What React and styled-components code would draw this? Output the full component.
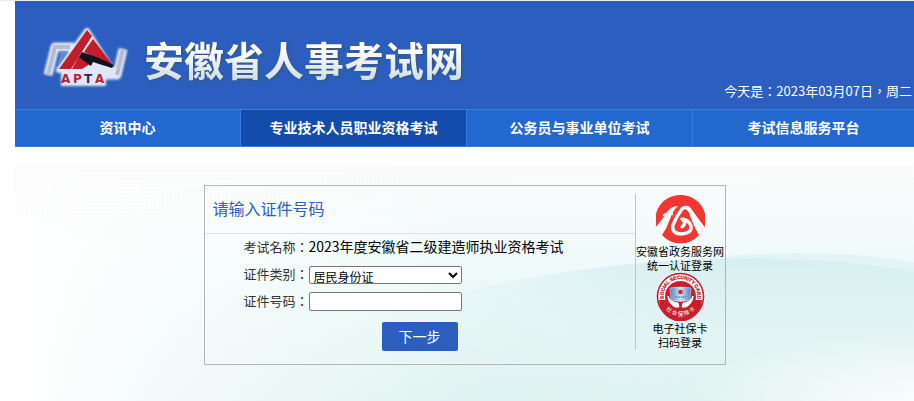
import React, { useState } from 'react'
import styled, { createGlobalStyle } from 'styled-components'

const colors = {
  primary: '#2b5ebf',
  nav: '#2368cf',
  navActive: '#134cab',
  navBorder: '#3b7ade',
  border: '#b5b5b5',
  red: '#f03731',
  seal: '#c81f2d',
}

const sans = `'Noto Sans CJK SC', sans-serif`
// the TC face centres the full-width colon and comma
const sansCentered = `'Noto Sans CJK TC', 'Noto Sans CJK SC', sans-serif`

const GlobalStyle = createGlobalStyle`
  * {
    box-sizing: border-box;
  }
  body {
    margin: 0;
    background: #fff;
    font-family: ${sans};
    font-size: 14px;
    color: #000;
  }
`

const Page = styled.div`
  display: flex;
  flex-direction: column;
  min-height: 100vh;
  border-top: 1px solid #ececec;
  padding-left: 15px;
`

const Header = styled.header`
  display: flex;
  justify-content: space-between;
  height: 108px;
  padding: 25px 2px 0 27px;
  background: ${colors.primary};
`

const Brand = styled.a`
  display: flex;
  align-items: flex-start;
  gap: 14px;
  text-decoration: none;
`

const SiteName = styled.h1`
  margin: 3px 0 0;
  font-size: 40px;
  line-height: 60px;
  font-weight: 700;
  white-space: nowrap;
  color: transparent;
  background: linear-gradient(#fff 30%, #cfe0e8 85%);
  background-clip: text;
  filter: drop-shadow(1px 1px 1px rgba(70, 80, 90, 0.8));
`

const Today = styled.p`
  align-self: flex-end;
  margin: 0 0 8px;
  font-family: ${sansCentered};
  font-size: 13px;
  line-height: 20px;
  white-space: nowrap;
  color: #fff;
`

const Nav = styled.nav`
  display: grid;
  grid-template-columns: 226fr 226fr 226fr 221fr;
  border-top: 1px solid ${colors.navBorder};
  border-bottom: 1px solid ${colors.navBorder};
`

const NavLink = styled.a`
  padding-bottom: 2px;
  border-right: 1px solid ${colors.navBorder};
  background: ${(props) => (props.$active ? colors.navActive : colors.nav)};
  color: #fff;
  font-weight: 700;
  line-height: 34px;
  text-align: center;
  text-decoration: none;
  white-space: nowrap;
  &:last-child {
    border-right: 0;
  }
`

const Main = styled.main`
  position: relative;
  display: flex;
  justify-content: center;
  align-items: flex-start;
  flex: 1;
  margin-top: 19px;
  padding: 19px 16px 36px;
`

const Scenery = styled.svg`
  position: absolute;
  inset: 0;
  width: 100%;
  height: 100%;
`

const Panel = styled.section`
  position: relative;
  display: flex;
  width: 522px;
  min-height: 180px;
  border: 1px solid ${colors.border};
`

const Form = styled.form`
  flex: 1;
`

const Title = styled.h2`
  margin: 0;
  padding: 0 0 2px 8px;
  border-bottom: 1px solid #e2dfe2;
  color: ${colors.primary};
  font-size: 16px;
  line-height: 45px;
  font-weight: 400;
`

const Row = styled.div`
  display: flex;
  align-items: center;
  height: 27px;
`

const Label = styled.label`
  width: 104px;
  padding-bottom: 3px;
  font-family: ${sansCentered};
  font-size: 13px;
  text-align: right;
  color: #333;
`

const ExamName = styled.output`
  padding-bottom: 3px;
  font-size: 14px;
`

const Select = styled.select`
  width: 153px;
  height: 18px;
  padding: 0;
  border: 1px solid #767676;
  border-radius: 2px;
  background-color: #fff;
  color: #000;
  font-family: ${sans};
  font-size: 12px;
`

const Input = styled.input`
  width: 153px;
  height: 19px;
  border: 1px solid #767676;
  border-radius: 2px;
  background: #fff;
  font-size: 13px;
`

const NextButton = styled.button`
  display: block;
  width: 76px;
  height: 29px;
  margin: 7px auto 0;
  padding: 0 0 2px;
  border: 0;
  border-radius: 2px;
  background: ${colors.primary};
  color: #fff;
  font-family: ${sans};
  font-size: 14px;
`

const Side = styled.aside`
  display: flex;
  flex-direction: column;
  width: 90px;
  margin: 8px 0 14px;
  padding-top: 1px;
  border-left: 1px solid #c4c4c4;
`

const LoginLink = styled.a`
  display: flex;
  flex-direction: column;
  align-items: center;
  color: #000;
  font-size: 11px;
  line-height: 14px;
  text-align: center;
  text-decoration: none;
  white-space: nowrap;
`

const AptaLogo = () => (
  <svg width="88" height="62" viewBox="0 0 88 62" aria-hidden="true">
    <defs>
      <filter id="glow" x="-20%" y="-20%" width="140%" height="140%">
        <feGaussianBlur stdDeviation="0.8" />
      </filter>
    </defs>
    <g filter="url(#glow)" fill="none" stroke="#dfe8f6" strokeWidth="9" strokeLinejoin="round">
      <path d="M32 21H13L6 49" />
      <path d="M81 23L75 49H63" />
      <path d="M45 5L17 44H70Z" fill="#dfe8f6" strokeWidth="6" />
      <path d="M19 53H64" strokeWidth="14" />
    </g>
    <path d="M28 21H13L6 49M81 23L75 49" fill="none" stroke="#b4bdcd" strokeWidth="4" />
    <path d="M19 25L15 41L26 25Z" fill="#6f91d2" opacity="0.8" />
    <path d="M45 4L50 10L29 43H17Z" fill="#c31c2b" />
    <path d="M51 13L70 38L63 37L42 26Z" fill="#c31c2b" />
    <path d="M37 30L48 38L40 43H30Z" fill="#c31c2b" />
    <path d="M40 26L57 32L72 39L70 42L57 38L51 36L49 40L37 31Z" fill="#10141c" />
    <g fontFamily="'DejaVu Sans', sans-serif" fontSize="12" fontWeight="700" fill="#b3243a">
      <text x="19" y="57">A</text>
      <text x="31" y="57">P</text>
      <text x="42" y="57" fill="#27304a">T</text>
      <text x="53" y="57">A</text>
    </g>
  </svg>
)

const GovServiceLogo = () => (
  <svg width="49" height="49" viewBox="0 0 49 49" aria-hidden="true">
    <path
      d="M24.500 0A24.500 24.500 0 0 1 48.500 32L43 40A24.500 24.500 0 0 1 6 40L.5 32A24.500 24.500 0 0 1 24.500 0Z"
      fill={colors.red}
    />
    <path d="M0 32L10 19Q14 11 22 11Q17 15 14 24Q11 33 6 40Z" fill="#fff" />
    <path d="M48.500 32L36 15Q33 9 28 12L33 17Q36 28 43 40Z" fill="#fff" />
    <g fill="none" stroke="#fff" strokeLinecap="round" strokeLinejoin="round">
      <path d="M8 20Q12 17.500 16 19" strokeWidth="2.500" />
      <path
        d="M34 16Q30 10 26 14Q20 22 17 30Q15 38.500 25 39Q36 38.500 35 31Q33 25 26 24Q31 28 26 32"
        strokeWidth="3.500"
      />
    </g>
  </svg>
)

const SocialCardLogo = () => (
  <svg width="49" height="49" viewBox="0 0 49 49" aria-hidden="true">
    <defs>
      <path id="seal-top" d="M9.500 32A17 17 0 1 1 39.500 32" />
      <path id="seal-bottom" d="M6 31A19.800 19.800 0 0 0 43 31" />
      <linearGradient id="card" x1="0" y1="0" x2="1" y2="0">
        <stop offset="0" stopColor="#4b83c9" />
        <stop offset="0.5" stopColor="#cfe5f7" />
        <stop offset="1" stopColor="#4b83c9" />
      </linearGradient>
    </defs>
    <circle cx="24.500" cy="24.500" r="23" fill="#fff" stroke={colors.seal} strokeWidth="1.600" />
    <path d="M3 28A21.500 21.500 0 0 0 46 28Z" fill={colors.seal} />
    <circle cx="24.500" cy="24.500" r="15.500" fill={colors.seal} />
    <text
      fontFamily="'Liberation Sans Narrow', 'Liberation Sans', sans-serif"
      fontSize="4.800"
      fontWeight="700"
      fill={colors.seal}
      stroke={colors.seal}
      strokeWidth="0.300"
    >
      <textPath href="#seal-top" startOffset="50%" textAnchor="middle">
        SOCIAL SECURITY CARD
      </textPath>
    </text>
    <text fontFamily={sans} fontSize="5.500" fill="#fff">
      <textPath href="#seal-bottom" startOffset="50%" textAnchor="middle">
        社 会 保 障 卡
      </textPath>
    </text>
    <path
      d="M12 24Q14 30 22 31L23 35H19Q12 31 12 24ZM37 24Q35 30 27 31L26 35H30Q37 31 37 24Z"
      fill="#fff"
      stroke="#fff"
    />
    <path d="M14 16Q24.500 14 35 16L34 28Q24.500 31 15 28Z" fill="url(#card)" stroke="#dcecf8" strokeWidth="0.500" />
    <circle cx="24.500" cy="20" r="2.300" fill="#e2202c" />
    <path d="M19 25H30" stroke="#3f6fae" strokeWidth="1.200" strokeDasharray="1.500 0.500" />
  </svg>
)

const Background = () => (
  <Scenery viewBox="0 0 899 235" preserveAspectRatio="none" aria-hidden="true">
    <defs>
      <linearGradient id="sky" x1="0" y1="0" x2="0" y2="1">
        <stop offset="0" stopColor="#fcfcfc" />
        <stop offset="0.400" stopColor="#f0fafa" />
        <stop offset="1" stopColor="#dff3f1" />
      </linearGradient>
      <linearGradient id="hill" x1="0" y1="0" x2="0" y2="1">
        <stop offset="0" stopColor="#cfebee" />
        <stop offset="1" stopColor="#e0f3f1" stopOpacity="0" />
      </linearGradient>
      <linearGradient id="hill-fade">
        <stop offset="0.400" stopColor="#000" />
        <stop offset="0.750" stopColor="#fff" />
      </linearGradient>
      <mask id="hill-mask">
        <rect width="899" height="235" fill="url(#hill-fade)" />
      </mask>
      <linearGradient id="left-fade">
        <stop offset="0" stopColor="#fff" />
        <stop offset="0.350" stopColor="#fff" stopOpacity="0.600" />
        <stop offset="1" stopColor="#fff" stopOpacity="0" />
      </linearGradient>
      <radialGradient id="corner">
        <stop offset="0" stopColor="#fafdfd" />
        <stop offset="1" stopColor="#fafdfd" stopOpacity="0" />
      </radialGradient>
      <linearGradient id="dots-fade" x1="0" y1="0" x2="0" y2="1">
        <stop offset="0" stopColor="#fff" />
        <stop offset="1" stopColor="#000" />
      </linearGradient>
      <mask id="dots-mask">
        <rect width="899" height="80" fill="url(#dots-fade)" />
      </mask>
      <pattern id="dots" width="4" height="4" patternUnits="userSpaceOnUse">
        <path d="M0 0H4M0 0V4" stroke="#f7f8f8" strokeWidth="2" />
      </pattern>
    </defs>
    <rect width="899" height="235" fill="url(#sky)" />
    <g mask="url(#hill-mask)">
      <path d="M340 160C500 96 740 76 899 106V235H340Z" fill="url(#hill)" opacity="0.800" />
      <path d="M690 92C760 84 840 86 899 96V120Q800 90 690 92Z" fill="#d8f0f0" opacity="0.600" />
    </g>
    <rect width="460" height="235" fill="url(#left-fade)" />
    <ellipse cx="899" cy="235" rx="230" ry="70" fill="url(#corner)" />
    <rect width="899" height="80" fill="url(#dots)" mask="url(#dots-mask)" />
  </Scenery>
)

const navItems = ['资讯中心', '专业技术人员职业资格考试', '公务员与事业单位考试', '考试信息服务平台']

const LoginForm = () => {
  const [idNumber, setIdNumber] = useState('')
  return (
    <Form onSubmit={(e) => e.preventDefault()}>
      <Title>请输入证件号码</Title>
      <Row>
        <Label htmlFor="exam">考试名称：</Label>
        <ExamName id="exam">2023年度安徽省二级建造师执业资格考试</ExamName>
      </Row>
      <Row>
        <Label htmlFor="idType">证件类别：</Label>
        <Select id="idType">
          <option>居民身份证</option>
        </Select>
      </Row>
      <Row>
        <Label htmlFor="idNumber">证件号码：</Label>
        <Input id="idNumber" value={idNumber} onChange={(e) => setIdNumber(e.target.value)} />
      </Row>
      <NextButton type="submit">下一步</NextButton>
    </Form>
  )
}

const App = () => (
  <>
    <GlobalStyle />
    <Page>
      <Header>
        <Brand href="#">
          <AptaLogo />
          <SiteName>安徽省人事考试网</SiteName>
        </Brand>
        <Today>今天是：2023年03月07日，周二</Today>
      </Header>
      <Nav>
        {navItems.map((item, i) => (
          <NavLink key={item} href="#" $active={i === 1}>
            {item}
          </NavLink>
        ))}
      </Nav>
      <Main>
        <Background />
        <Panel>
          <LoginForm />
          <Side>
            <LoginLink href="#">
              <GovServiceLogo />
              <span>安徽省政务服务网</span>
              <span>统一认证登录</span>
            </LoginLink>
            <LoginLink href="#">
              <SocialCardLogo />
              <span>电子社保卡</span>
              <span>扫码登录</span>
            </LoginLink>
          </Side>
        </Panel>
      </Main>
    </Page>
  </>
)

export default App
